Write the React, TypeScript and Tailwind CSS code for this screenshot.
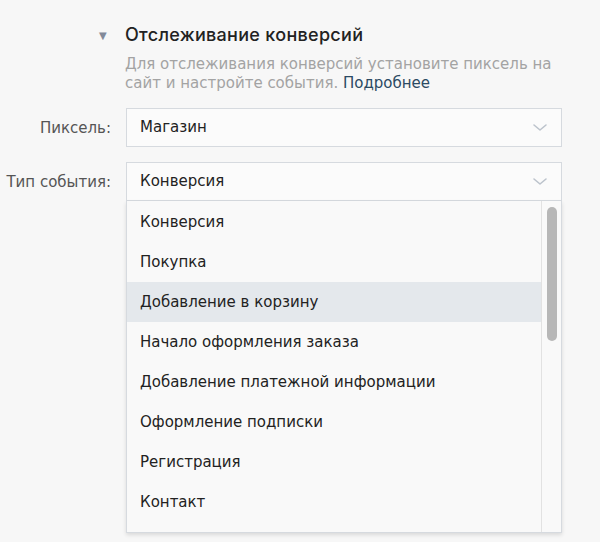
import React from "react";

const items = [
  "Конверсия",
  "Покупка",
  "Добавление в корзину",
  "Начало оформления заказа",
  "Добавление платежной информации",
  "Оформление подписки",
  "Регистрация",
  "Контакт",
];

function Chevron() {
  return (
    <svg width="16" height="10" viewBox="0 0 16 10" fill="none">
      <path d="M2 2l6 5 6-5" stroke="#bcc3cc" strokeWidth="1.6" strokeLinecap="round" strokeLinejoin="round" />
    </svg>
  );
}

export default function App() {
  return (
    <div
      className="w-[600px] h-[542px] bg-[#f7f7f7] overflow-hidden text-[#222]"
      style={{ fontFamily: "'DejaVu Sans', sans-serif" }}
    >
      <div className="pt-[23px] pl-[99px] flex items-center">
        <span className="text-[10px] text-[#828a99] w-[26px]">▼</span>
        <span
          className="text-[18px] font-medium leading-[24px] tracking-[0.3px] text-[#222]"
          style={{ fontFamily: "Inter, sans-serif" }}
        >
          Отслеживание конверсий
        </span>
      </div>
      <div className="pl-[125px] pt-[8px] w-[560px] text-[15px] leading-[19px] text-[#a3a3a3]">
        Для отслеживания конверсий установите пиксель на сайт и настройте события.{" "}
        <span className="text-[#2b4a63]">Подробнее</span>
      </div>

      <div className="mt-[15px] grid grid-cols-[113px_436px] gap-x-[13px] gap-y-[15px]">
        <div className="flex items-center justify-end pr-[2px] pt-[2px] text-[15px] text-[#555]">Пиксель:</div>
        <div className="h-[39px] border border-[#d6dadf] bg-[#fbfbfb] flex items-center justify-between pl-[13px] pr-[13px] text-[15px]">
          <span>Магазин</span>
          <Chevron />
        </div>

        <div className="h-[39px] flex items-center justify-end pr-[2px] pt-[2px] text-[15px] text-[#555]">Тип события:</div>
        <div className="relative">
          <div className="h-[39px] border border-[#d6dadf] bg-[#fbfbfb] flex items-center justify-between pl-[13px] pr-[13px] text-[15px]">
            <span>Конверсия</span>
            <Chevron />
          </div>
          <div className="border border-t-0 border-[#d6dadf] bg-[#f9f9f9] shadow-[0_2px_4px_rgba(0,0,0,0.12)] flex">
            <div className="flex-1 pt-[1px] pb-[10px]">
              {items.map((t, i) => (
                <div
                  key={t}
                  className={`h-[40px] flex items-center pl-[13px] text-[15px] ${i === 2 ? "bg-[#e4e8ec]" : ""}`}
                >
                  {t}
                </div>
              ))}
            </div>
            <div className="w-[20px] border-l border-[#e2e2e2] pt-[6px] flex justify-center">
              <div className="w-[10px] h-[134px] rounded-full bg-[#b7b7b7]" />
            </div>
          </div>
        </div>
      </div>
    </div>
  );
}
